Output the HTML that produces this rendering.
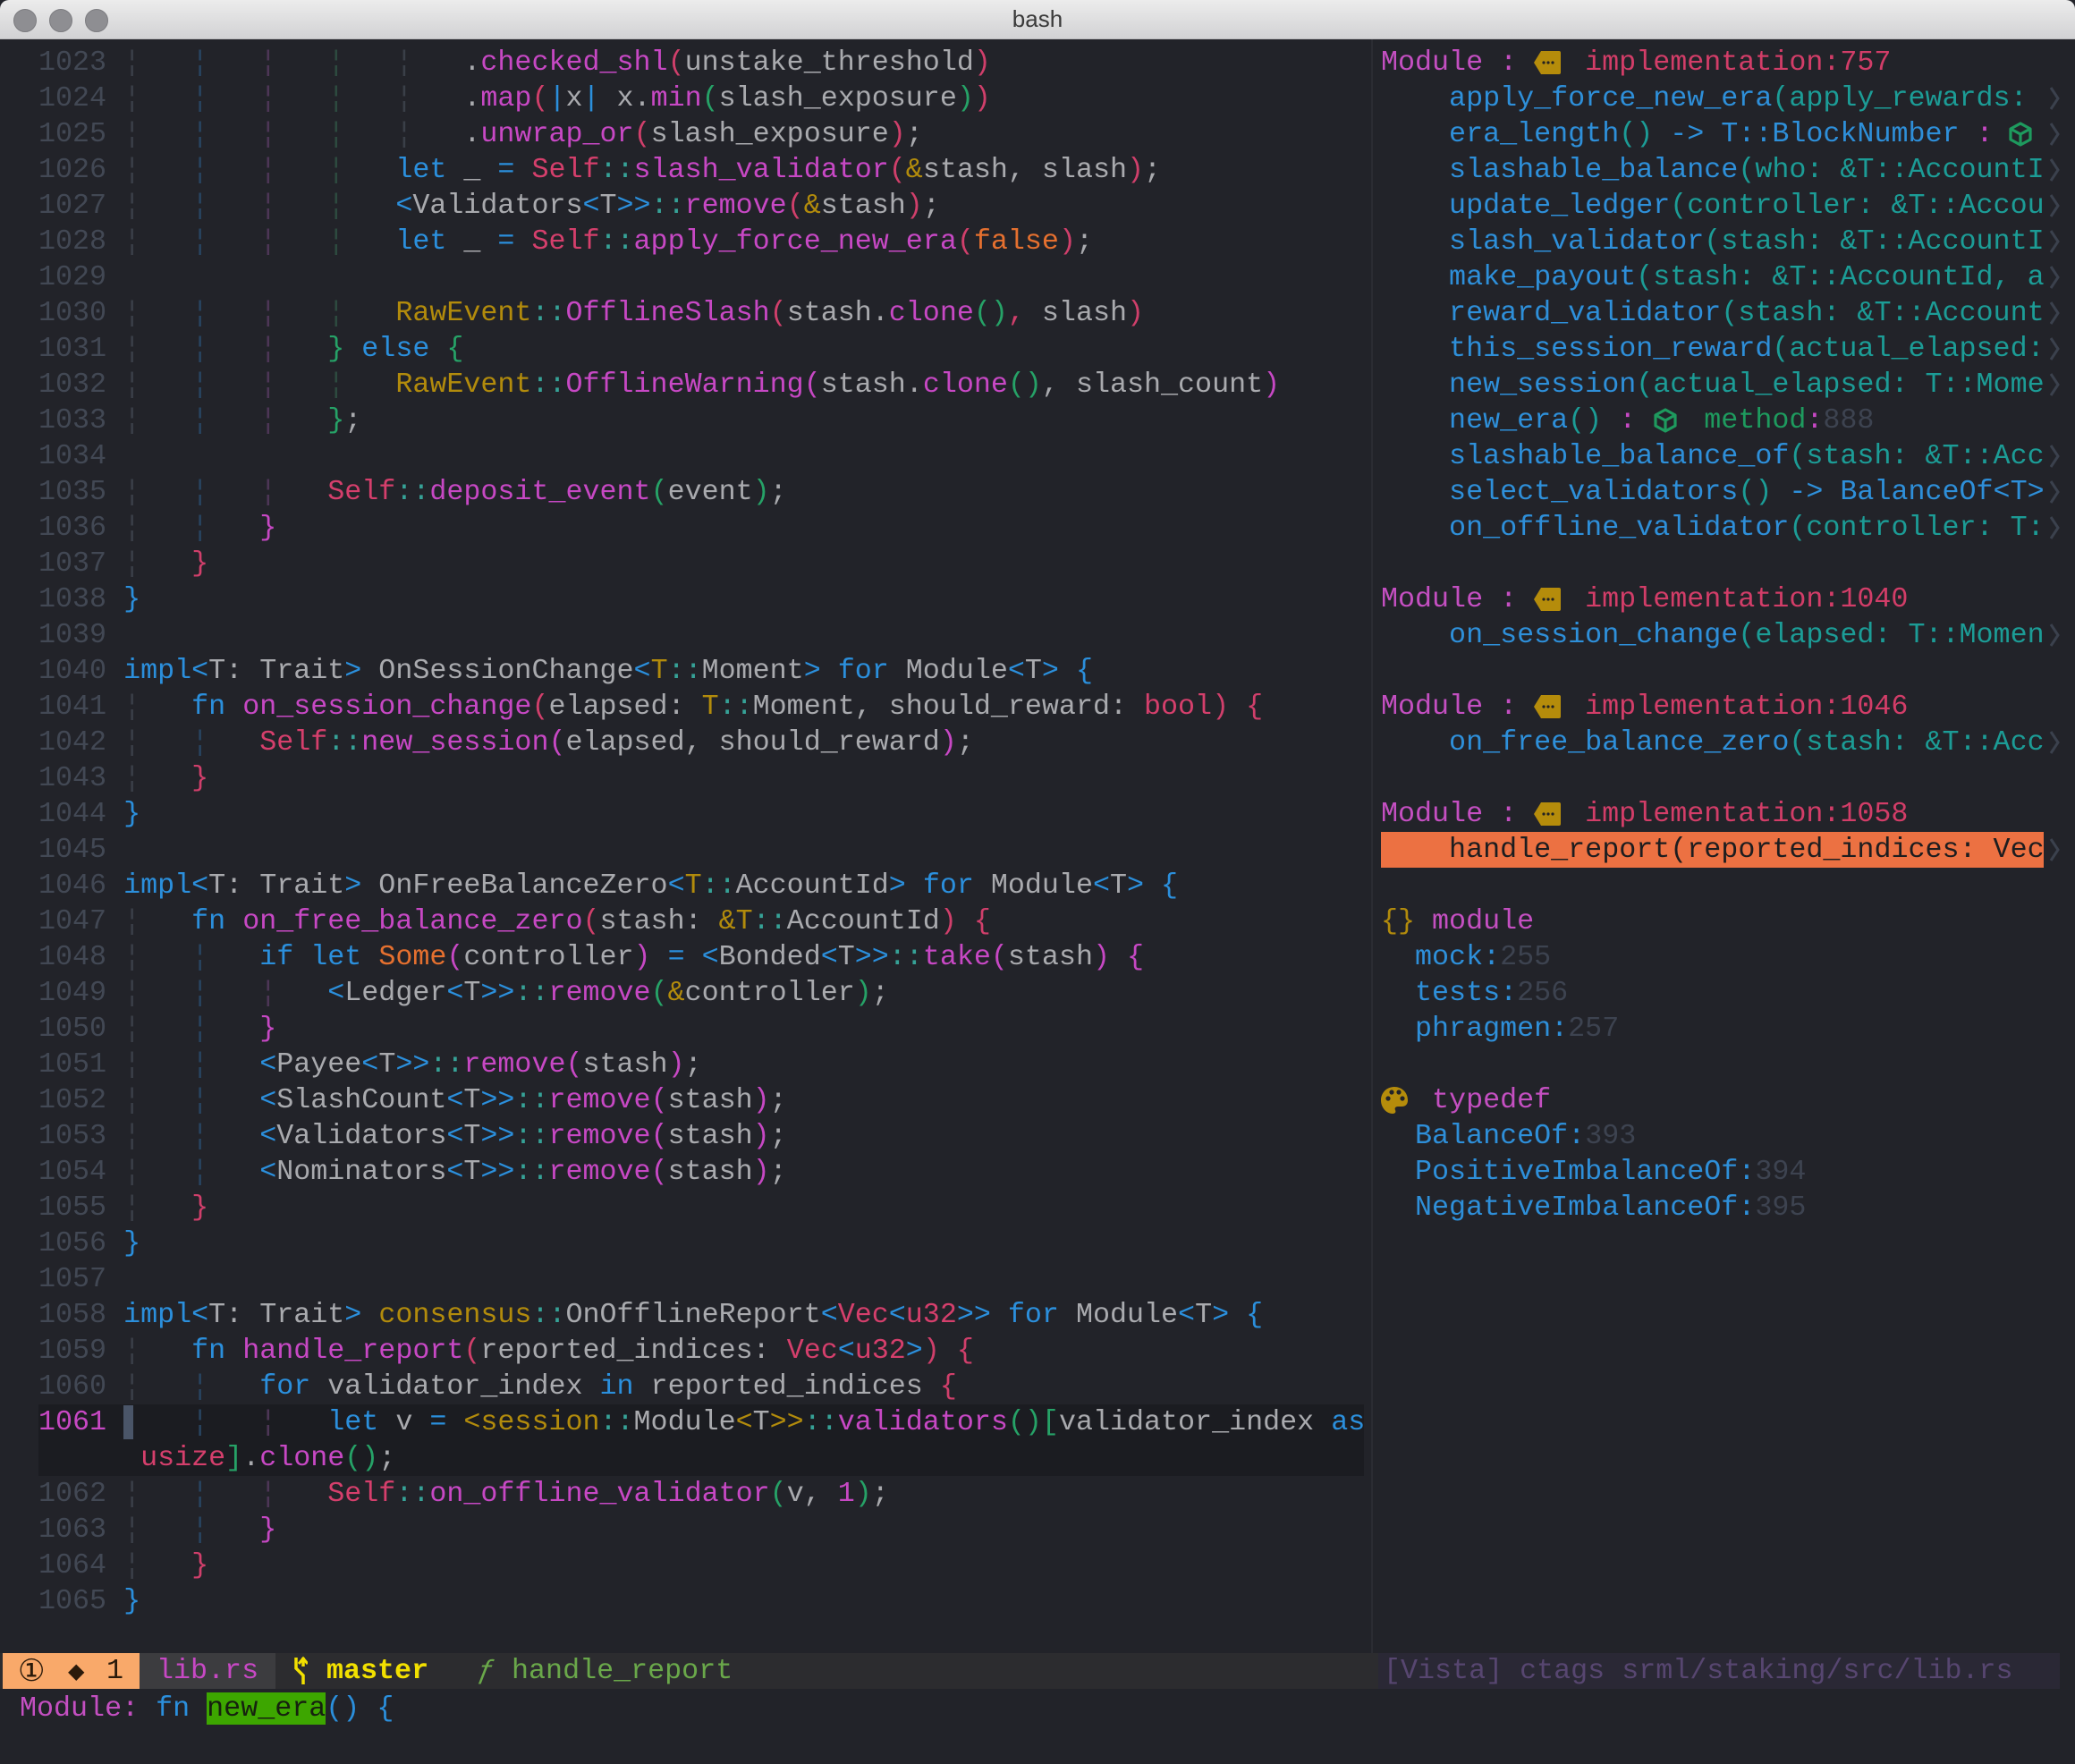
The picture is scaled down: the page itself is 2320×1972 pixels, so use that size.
<!DOCTYPE html>
<html><head><meta charset="utf-8">
<style>
html,body{margin:0;padding:0}
body{width:2320px;height:1972px;background:#222329;overflow:hidden;position:relative;font-family:"Liberation Mono","DejaVu Sans Mono",monospace;font-size:31.7px}
.title{position:absolute;left:0;top:0;width:2320px;height:43px;background:linear-gradient(#ececec,#d2d2d4);border-bottom:1px solid #b9b9bb;border-radius:10px 10px 0 0}
.title .t{position:absolute;left:0;width:2320px;top:0;line-height:43px;text-align:center;font-family:"Liberation Sans",sans-serif;font-size:26px;color:#3a3a3a}
.dot{position:absolute;top:10px;width:24px;height:24px;border-radius:50%;background:#8e8e92;border:1px solid #7c7c80}
.r{position:absolute;left:43px;height:40px;line-height:40px;white-space:pre;color:#a9aaae}
.rr{position:absolute;left:1544px;height:40px;line-height:40px;white-space:pre;color:#2e8fd9}
.ln{color:#424854}
.g{color:#3a3f48}.g2{color:#284460}.g3{color:#4d3656}.g4{color:#2d4a3f}
.k{color:#2b8fdc}.f{color:#c748c4}.s{color:#d53f6c}.y{color:#b28b0c}.c{color:#36a297}
.p{color:#d03f6b}.gr{color:#26a267}.m{color:#c748c4}.b{color:#2b8fdc}.o{color:#e5702f}
.pt{color:#1c9c96}.mod{color:#c44fc1}.imp{color:#d23d68}.dim{color:#3d4350}
.sep{position:absolute;left:1533px;top:44px;width:2px;height:1804px;background:#2b2c33}
.chev{position:absolute;left:2290px;width:14px;height:40px}
</style></head><body>
<div class="title"><div class="dot" style="left:15px"></div><div class="dot" style="left:55px"></div><div class="dot" style="left:95px"></div><div class="t">bash</div></div>
<div class="sep"></div>

<div style="position:absolute;left:43px;top:1570px;width:1482px;height:80px;background:#1b1c21"></div>
<div style="position:absolute;left:138px;top:1571px;width:11px;height:38px;background:#4a5568"></div>

<div class="r" style="top:50px"><span class="ln">1023</span> <span class="g">¦</span>   <span class="g2">¦</span>   <span class="g3">¦</span>   <span class="g4">¦</span>   <span class="g">¦</span>   .<span class="f">checked_shl</span><span class="p">(</span>unstake_threshold<span class="p">)</span></div>
<div class="r" style="top:90px"><span class="ln">1024</span> <span class="g">¦</span>   <span class="g2">¦</span>   <span class="g3">¦</span>   <span class="g4">¦</span>   <span class="g">¦</span>   .<span class="f">map</span><span class="p">(</span><span class="b">|</span>x<span class="b">|</span> x.<span class="f">min</span><span class="gr">(</span>slash_exposure<span class="gr">)</span><span class="p">)</span></div>
<div class="r" style="top:130px"><span class="ln">1025</span> <span class="g">¦</span>   <span class="g2">¦</span>   <span class="g3">¦</span>   <span class="g4">¦</span>   <span class="g">¦</span>   .<span class="f">unwrap_or</span><span class="p">(</span>slash_exposure<span class="p">)</span>;</div>
<div class="r" style="top:170px"><span class="ln">1026</span> <span class="g">¦</span>   <span class="g2">¦</span>   <span class="g3">¦</span>   <span class="g4">¦</span>   <span class="k">let</span> _ <span class="k">=</span> <span class="s">Self</span><span class="c">::</span><span class="f">slash_validator</span><span class="p">(</span><span class="y">&amp;</span>stash, slash<span class="p">)</span>;</div>
<div class="r" style="top:210px"><span class="ln">1027</span> <span class="g">¦</span>   <span class="g2">¦</span>   <span class="g3">¦</span>   <span class="g4">¦</span>   <span class="b">&lt;</span>Validators<span class="b">&lt;</span>T<span class="b">&gt;&gt;</span><span class="c">::</span><span class="f">remove</span><span class="p">(</span><span class="y">&amp;</span>stash<span class="p">)</span>;</div>
<div class="r" style="top:250px"><span class="ln">1028</span> <span class="g">¦</span>   <span class="g2">¦</span>   <span class="g3">¦</span>   <span class="g4">¦</span>   <span class="k">let</span> _ <span class="k">=</span> <span class="s">Self</span><span class="c">::</span><span class="f">apply_force_new_era</span><span class="p">(</span><span class="o">false</span><span class="p">)</span>;</div>
<div class="r" style="top:290px"><span class="ln">1029</span></div>
<div class="r" style="top:330px"><span class="ln">1030</span> <span class="g">¦</span>   <span class="g2">¦</span>   <span class="g3">¦</span>   <span class="g4">¦</span>   <span class="y">RawEvent</span><span class="c">::</span><span class="f">OfflineSlash</span><span class="p">(</span>stash.<span class="f">clone</span><span class="gr">()</span><span class="p">,</span> slash<span class="p">)</span></div>
<div class="r" style="top:370px"><span class="ln">1031</span> <span class="g">¦</span>   <span class="g2">¦</span>   <span class="g3">¦</span>   <span class="gr">}</span> <span class="k">else</span> <span class="gr">{</span></div>
<div class="r" style="top:410px"><span class="ln">1032</span> <span class="g">¦</span>   <span class="g2">¦</span>   <span class="g3">¦</span>   <span class="g4">¦</span>   <span class="y">RawEvent</span><span class="c">::</span><span class="f">OfflineWarning</span><span class="m">(</span>stash.<span class="f">clone</span><span class="gr">()</span>, slash_count<span class="m">)</span></div>
<div class="r" style="top:450px"><span class="ln">1033</span> <span class="g">¦</span>   <span class="g2">¦</span>   <span class="g3">¦</span>   <span class="gr">}</span>;</div>
<div class="r" style="top:490px"><span class="ln">1034</span></div>
<div class="r" style="top:530px"><span class="ln">1035</span> <span class="g">¦</span>   <span class="g2">¦</span>   <span class="g3">¦</span>   <span class="s">Self</span><span class="c">::</span><span class="f">deposit_event</span><span class="gr">(</span>event<span class="gr">)</span>;</div>
<div class="r" style="top:570px"><span class="ln">1036</span> <span class="g">¦</span>   <span class="g2">¦</span>   <span class="m">}</span></div>
<div class="r" style="top:610px"><span class="ln">1037</span> <span class="g">¦</span>   <span class="p">}</span></div>
<div class="r" style="top:650px"><span class="ln">1038</span> <span class="b">}</span></div>
<div class="r" style="top:690px"><span class="ln">1039</span></div>
<div class="r" style="top:730px"><span class="ln">1040</span> <span class="k">impl</span><span class="b">&lt;</span>T: Trait<span class="b">&gt;</span> OnSessionChange<span class="b">&lt;</span><span class="y">T</span><span class="c">::</span>Moment<span class="b">&gt;</span> <span class="k">for</span> Module<span class="b">&lt;</span>T<span class="b">&gt;</span> <span class="b">{</span></div>
<div class="r" style="top:770px"><span class="ln">1041</span> <span class="g">¦</span>   <span class="k">fn</span> <span class="f">on_session_change</span><span class="p">(</span>elapsed: <span class="y">T</span><span class="c">::</span>Moment, should_reward: <span class="s">bool</span><span class="p">)</span> <span class="p">{</span></div>
<div class="r" style="top:810px"><span class="ln">1042</span> <span class="g">¦</span>   <span class="g2">¦</span>   <span class="s">Self</span><span class="c">::</span><span class="f">new_session</span><span class="m">(</span>elapsed, should_reward<span class="m">)</span>;</div>
<div class="r" style="top:850px"><span class="ln">1043</span> <span class="g">¦</span>   <span class="p">}</span></div>
<div class="r" style="top:890px"><span class="ln">1044</span> <span class="b">}</span></div>
<div class="r" style="top:930px"><span class="ln">1045</span></div>
<div class="r" style="top:970px"><span class="ln">1046</span> <span class="k">impl</span><span class="b">&lt;</span>T: Trait<span class="b">&gt;</span> OnFreeBalanceZero<span class="b">&lt;</span><span class="y">T</span><span class="c">::</span>AccountId<span class="b">&gt;</span> <span class="k">for</span> Module<span class="b">&lt;</span>T<span class="b">&gt;</span> <span class="b">{</span></div>
<div class="r" style="top:1010px"><span class="ln">1047</span> <span class="g">¦</span>   <span class="k">fn</span> <span class="f">on_free_balance_zero</span><span class="p">(</span>stash: <span class="y">&amp;T</span><span class="c">::</span>AccountId<span class="p">)</span> <span class="p">{</span></div>
<div class="r" style="top:1050px"><span class="ln">1048</span> <span class="g">¦</span>   <span class="g2">¦</span>   <span class="k">if let</span> <span class="o">Some</span><span class="m">(</span>controller<span class="m">)</span> <span class="k">=</span> <span class="b">&lt;</span>Bonded<span class="b">&lt;</span>T<span class="b">&gt;&gt;</span><span class="c">::</span><span class="f">take</span><span class="m">(</span>stash<span class="m">)</span> <span class="m">{</span></div>
<div class="r" style="top:1090px"><span class="ln">1049</span> <span class="g">¦</span>   <span class="g2">¦</span>   <span class="g3">¦</span>   <span class="b">&lt;</span>Ledger<span class="b">&lt;</span>T<span class="b">&gt;&gt;</span><span class="c">::</span><span class="f">remove</span><span class="gr">(</span><span class="y">&amp;</span>controller<span class="gr">)</span>;</div>
<div class="r" style="top:1130px"><span class="ln">1050</span> <span class="g">¦</span>   <span class="g2">¦</span>   <span class="m">}</span></div>
<div class="r" style="top:1170px"><span class="ln">1051</span> <span class="g">¦</span>   <span class="g2">¦</span>   <span class="b">&lt;</span>Payee<span class="b">&lt;</span>T<span class="b">&gt;&gt;</span><span class="c">::</span><span class="f">remove</span><span class="m">(</span>stash<span class="m">)</span>;</div>
<div class="r" style="top:1210px"><span class="ln">1052</span> <span class="g">¦</span>   <span class="g2">¦</span>   <span class="b">&lt;</span>SlashCount<span class="b">&lt;</span>T<span class="b">&gt;&gt;</span><span class="c">::</span><span class="f">remove</span><span class="m">(</span>stash<span class="m">)</span>;</div>
<div class="r" style="top:1250px"><span class="ln">1053</span> <span class="g">¦</span>   <span class="g2">¦</span>   <span class="b">&lt;</span>Validators<span class="b">&lt;</span>T<span class="b">&gt;&gt;</span><span class="c">::</span><span class="f">remove</span><span class="m">(</span>stash<span class="m">)</span>;</div>
<div class="r" style="top:1290px"><span class="ln">1054</span> <span class="g">¦</span>   <span class="g2">¦</span>   <span class="b">&lt;</span>Nominators<span class="b">&lt;</span>T<span class="b">&gt;&gt;</span><span class="c">::</span><span class="f">remove</span><span class="m">(</span>stash<span class="m">)</span>;</div>
<div class="r" style="top:1330px"><span class="ln">1055</span> <span class="g">¦</span>   <span class="p">}</span></div>
<div class="r" style="top:1370px"><span class="ln">1056</span> <span class="b">}</span></div>
<div class="r" style="top:1410px"><span class="ln">1057</span></div>
<div class="r" style="top:1450px"><span class="ln">1058</span> <span class="k">impl</span><span class="b">&lt;</span>T: Trait<span class="b">&gt;</span> <span class="y">consensus</span><span class="c">::</span>OnOfflineReport<span class="b">&lt;</span><span class="s">Vec</span><span class="b">&lt;</span><span class="s">u32</span><span class="b">&gt;&gt;</span> <span class="k">for</span> Module<span class="b">&lt;</span>T<span class="b">&gt;</span> <span class="b">{</span></div>
<div class="r" style="top:1490px"><span class="ln">1059</span> <span class="g">¦</span>   <span class="k">fn</span> <span class="f">handle_report</span><span class="p">(</span>reported_indices: <span class="s">Vec</span><span class="b">&lt;</span><span class="s">u32</span><span class="b">&gt;</span><span class="p">)</span> <span class="p">{</span></div>
<div class="r" style="top:1530px"><span class="ln">1060</span> <span class="g">¦</span>   <span class="g2">¦</span>   <span class="k">for</span> validator_index <span class="k">in</span> reported_indices <span class="p">{</span></div>
<div class="r" style="top:1570px"><span class="m">1061</span>     <span class="g2">¦</span>   <span class="g3">¦</span>   <span class="k">let</span> v <span class="k">=</span> <span class="y">&lt;session</span><span class="c">::</span>Module<span class="y">&lt;</span>T<span class="y">&gt;&gt;</span><span class="c">::</span><span class="f">validators</span><span class="gr">()[</span>validator_index <span class="k">as</span></div>
<div class="r" style="top:1610px">      <span class="s">usize</span><span class="gr">]</span>.<span class="f">clone</span><span class="gr">()</span>;</div>
<div class="r" style="top:1650px"><span class="ln">1062</span> <span class="g">¦</span>   <span class="g2">¦</span>   <span class="g3">¦</span>   <span class="s">Self</span><span class="c">::</span><span class="f">on_offline_validator</span><span class="gr">(</span>v, <span class="m">1</span><span class="gr">)</span>;</div>
<div class="r" style="top:1690px"><span class="ln">1063</span> <span class="g">¦</span>   <span class="g2">¦</span>   <span class="m">}</span></div>
<div class="r" style="top:1730px"><span class="ln">1064</span> <span class="g">¦</span>   <span class="p">}</span></div>
<div class="r" style="top:1770px"><span class="ln">1065</span> <span class="b">}</span></div>

<svg width="0" height="0" style="position:absolute"><defs>
<g id="tag"><path d="M9 1H29Q31 1 31 3V25Q31 27 29 27H9L1 14Z" fill="#b58c0b"/><circle cx="12" cy="14" r="1.6" fill="#222"/><circle cx="17" cy="14" r="1.6" fill="#222"/><circle cx="22" cy="14" r="1.6" fill="#222"/></g>
<g id="cube" fill="none" stroke="#1e9a5e" stroke-width="3.2" stroke-linejoin="round"><path d="M13 2L24 8V20L13 26L2 20V8Z"/><path d="M2 8L13 14L24 8M13 14V26"/></g>
<g id="chev"><path d="M3 8L11 20L3 32" fill="none" stroke="#3b414d" stroke-width="3"/></g>
</defs></svg>

<div class="rr mod" style="top:50px">Module : <span style="display:inline-block;width:38px"></span> <span class="imp">implementation:757</span></div>
<svg style="position:absolute;left:1714px;top:56px" width="32" height="28"><use href="#tag"/></svg>
<div class="rr" style="top:90px">    apply_force_new_era<span class="pt">(apply_rewards: </span></div>
<div class="rr" style="top:130px">    era_length<span class="pt">()</span> -&gt; T::BlockNumber <span class="m">:</span></div>
<svg style="position:absolute;left:2246px;top:136px" width="26" height="28"><use href="#cube"/></svg>
<div class="rr" style="top:170px">    slashable_balance<span class="pt">(who: &amp;T::AccountI</span></div>
<div class="rr" style="top:210px">    update_ledger<span class="pt">(controller: &amp;T::Accou</span></div>
<div class="rr" style="top:250px">    slash_validator<span class="pt">(stash: &amp;T::AccountI</span></div>
<div class="rr" style="top:290px">    make_payout<span class="pt">(stash: &amp;T::AccountId, a</span></div>
<div class="rr" style="top:330px">    reward_validator<span class="pt">(stash: &amp;T::Account</span></div>
<div class="rr" style="top:370px">    this_session_reward<span class="pt">(actual_elapsed:</span></div>
<div class="rr" style="top:410px">    new_session<span class="pt">(actual_elapsed: T::Mome</span></div>
<div class="rr" style="top:450px">    new_era<span class="pt">()</span> <span class="m">:</span>    <span style="color:#1e9a5e">method</span><span class="m">:</span><span class="dim">888</span></div>
<svg style="position:absolute;left:1849px;top:456px" width="26" height="28"><use href="#cube"/></svg>
<div class="rr" style="top:490px">    slashable_balance_of<span class="pt">(stash: &amp;T::Acc</span></div>
<div class="rr" style="top:530px">    select_validators<span class="pt">()</span> -&gt; BalanceOf&lt;T&gt;</div>
<div class="rr" style="top:570px">    on_offline_validator<span class="pt">(controller: T:</span></div>

<div class="rr mod" style="top:650px">Module : <span style="display:inline-block;width:38px"></span> <span class="imp">implementation:1040</span></div>
<svg style="position:absolute;left:1714px;top:656px" width="32" height="28"><use href="#tag"/></svg>
<div class="rr" style="top:690px">    on_session_change<span class="pt">(elapsed: T::Momen</span></div>

<div class="rr mod" style="top:770px">Module : <span style="display:inline-block;width:38px"></span> <span class="imp">implementation:1046</span></div>
<svg style="position:absolute;left:1714px;top:776px" width="32" height="28"><use href="#tag"/></svg>
<div class="rr" style="top:810px">    on_free_balance_zero<span class="pt">(stash: &amp;T::Acc</span></div>

<div class="rr mod" style="top:890px">Module : <span style="display:inline-block;width:38px"></span> <span class="imp">implementation:1058</span></div>
<svg style="position:absolute;left:1714px;top:896px" width="32" height="28"><use href="#tag"/></svg>
<div class="rr" style="top:930px;width:741px;background:#ec7142;color:#1d1d1f">    handle_report(reported_indices: Vec</div>

<div class="rr" style="top:1010px"><span class="y">{}</span> <span class="mod">module</span></div>
<div class="rr" style="top:1050px">  mock:<span class="dim">255</span></div>
<div class="rr" style="top:1090px">  tests:<span class="dim">256</span></div>
<div class="rr" style="top:1130px">  phragmen:<span class="dim">257</span></div>
<div class="rr" style="top:1210px">   <span class="mod">typedef</span></div>
<svg style="position:absolute;left:1543px;top:1213px" width="32" height="34" viewBox="0 0 32 34"><path d="M16 2C7 2 1 9 1 17c0 8 6 15 13 15c3 0 4-2 3-4c-1-2 0-4 3-4h4c5 0 7-3 7-7C31 8 24 2 16 2Z" fill="#b58c0b"/><circle cx="9" cy="15" r="2.6" fill="#222329"/><circle cx="13" cy="8" r="2.6" fill="#222329"/><circle cx="21" cy="8" r="2.6" fill="#222329"/><circle cx="25" cy="15" r="2.6" fill="#222329"/></svg>
<div class="rr" style="top:1250px">  BalanceOf:<span class="dim">393</span></div>
<div class="rr" style="top:1290px">  PositiveImbalanceOf:<span class="dim">394</span></div>
<div class="rr" style="top:1330px">  NegativeImbalanceOf:<span class="dim">395</span></div>

<svg class="chev" style="top:90px"><use href="#chev"/></svg>
<svg class="chev" style="top:130px"><use href="#chev"/></svg>
<svg class="chev" style="top:170px"><use href="#chev"/></svg>
<svg class="chev" style="top:210px"><use href="#chev"/></svg>
<svg class="chev" style="top:250px"><use href="#chev"/></svg>
<svg class="chev" style="top:290px"><use href="#chev"/></svg>
<svg class="chev" style="top:330px"><use href="#chev"/></svg>
<svg class="chev" style="top:370px"><use href="#chev"/></svg>
<svg class="chev" style="top:410px"><use href="#chev"/></svg>
<svg class="chev" style="top:490px"><use href="#chev"/></svg>
<svg class="chev" style="top:530px"><use href="#chev"/></svg>
<svg class="chev" style="top:570px"><use href="#chev"/></svg>
<svg class="chev" style="top:690px"><use href="#chev"/></svg>
<svg class="chev" style="top:810px"><use href="#chev"/></svg>
<svg class="chev" style="top:930px"><use href="#chev"/></svg>

<div style="position:absolute;left:0;top:1848px;width:1541px;height:40px;background:#2c2c2f"></div>
<div style="position:absolute;left:3px;top:1848px;width:153px;height:40px;background:#f9a96a"></div>
<div style="position:absolute;left:156px;top:1848px;width:152px;height:40px;background:#3c3c3f"></div>
<div style="position:absolute;left:1541px;top:1848px;width:762px;height:40px;background:#2a2835"></div>
<div class="r" style="left:20px;top:1848px;color:#2a1a0a;font-family:'DejaVu Sans',sans-serif;font-size:34px">①</div>
<div class="r" style="left:76px;top:1848px;color:#2a1a0a;font-family:'DejaVu Sans',sans-serif;font-size:24px">◆</div>
<div class="r" style="left:119px;top:1848px;color:#2a1a0a">1</div>
<div class="r" style="left:175px;top:1848px;color:#c748c4">lib.rs</div>
<svg style="position:absolute;left:326px;top:1851px" width="18" height="34"><path d="M5 2V14L13 22V32M13 2V12" fill="none" stroke="#f2e000" stroke-width="3.5"/><path d="M8 9L13 3L18 9" fill="none" stroke="#f2e000" stroke-width="3"/></svg>
<div class="r" style="left:365px;top:1848px;color:#f2e000;font-weight:bold">master</div>
<div class="r" style="left:534px;top:1848px;color:#6aa84a"><i>ƒ</i> handle_report</div>
<div class="r" style="left:1547px;top:1848px;color:#574670">[Vista] ctags srml/staking/src/lib.rs</div>

<div class="r" style="left:22px;top:1890px"><span class="mod">Module:</span> <span class="k">fn</span> <span style="background:#3da600;color:#16210f">new_era</span><span class="k">() {</span></div>
</body></html>
